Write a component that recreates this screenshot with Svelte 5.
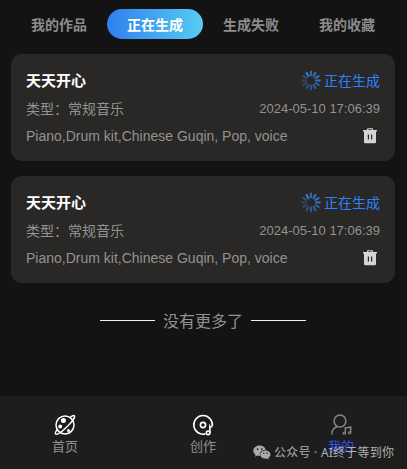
<script>
  const tabs = ['我的作品', '正在生成', '生成失败', '我的收藏'];
  const activeTab = 1;
  const songs = [
    { id: 1, title: '天天开心', type: '常规音乐', date: '2024-05-10 17:06:39', tags: 'Piano,Drum kit,Chinese Guqin, Pop, voice' },
    { id: 2, title: '天天开心', type: '常规音乐', date: '2024-05-10 17:06:39', tags: 'Piano,Drum kit,Chinese Guqin, Pop, voice' }
  ];
  const spokes = Array.from({ length: 12 }, (_, i) => i);
  const fade = [0.75, 0.8, 0.85, 0.9, 0.65, 0.6, 0.55, 0.45, 0.4, 0.35, 0.45, 0.95];
</script>

<div class="page">
  <div class="tabs">
    {#each tabs as tab, i}
      <div class="tab" class:active={i === activeTab}>{tab}</div>
    {/each}
  </div>

  <div class="list">
    {#each songs as song (song.id)}
      <div class="card">
        <div class="row head">
          <span class="title">{song.title}</span>
          <span class="status">
            <svg class="spinner" width="20" height="21" viewBox="0 0 20 21">
              {#each spokes as s}
                <line x1="10" y1="1.7" x2="10" y2="5.3" transform={`rotate(${s * 30} 10 10.5)`} stroke="#347fdc" stroke-width="2.2" stroke-linecap="round" opacity={fade[s]} />
              {/each}
            </svg>
            <span>正在生成</span>
          </span>
        </div>
        <div class="row info">
          <span>类型：{song.type}</span>
          <span class="date">{song.date}</span>
        </div>
        <div class="row tags">
          <span>{song.tags}</span>
          <svg class="trash" width="16" height="16" viewBox="0 0 16 16">
            <path fill="#d4d4d4" fill-rule="evenodd" d="M5 2V1.2Q5 .2 6 .2H10Q11 .2 11 1.2V2H15V3.5H14V14Q14 15.2 12.8 15.2H3.2Q2 15.2 2 14V3.5H1V2ZM6.2 2H9.8V1.3H6.2ZM5.8 6.5V11.5H7V6.5ZM9 6.5V11.5H10.2V6.5Z" />
          </svg>
        </div>
      </div>
    {/each}
  </div>

  <div class="end"><i></i><span>没有更多了</span><i></i></div>

  <nav>
    <div class="item">
      <svg width="22" height="22" viewBox="0 0 22 22" fill="none" stroke="#fff" stroke-width="1.5">
        <circle cx="11" cy="11" r="9" />
        <path d="M16 3.5C18 1.7 20 1.2 20.5 2C21.2 3.5 17 9 12.5 13.2C8 17.5 3 21 1.7 20C.8 19.2 2 17 3.7 15" />
        <g fill="#fff" stroke="none"><circle cx="9.4" cy="6.4" r="2.5" /><circle cx="6.2" cy="12.5" r="1.9" /><circle cx="14.5" cy="16.4" r="1.5" /></g>
      </svg>
      <span>首页</span>
    </div>
    <div class="item">
      <svg width="22" height="22" viewBox="0 0 22 22" fill="none" stroke="#fff" stroke-width="1.6">
        <path d="M13.3 19.9A9.3 9.3 0 1 1 20.3 12" />
        <circle cx="11" cy="11" r="2.6" />
        <circle cx="16.1" cy="18.8" r="1.8" />
        <path d="M17.9 18.8V12.5Q18.3 13.2 20.3 12.6" />
      </svg>
      <span>创作</span>
    </div>
    <div class="item mine">
      <svg width="22" height="22" viewBox="0 0 22 22" fill="none" stroke="#858585" stroke-width="1.5">
        <circle cx="10" cy="7" r="5.9" />
        <path d="M1.7 20.5C1.8 16 4.2 13.2 7.7 12.4M15.3 19.3V13.8L20.7 13.2V18.6" />
        <ellipse cx="14.3" cy="19.3" rx="1.3" ry="1" stroke-width="1.1" /><ellipse cx="19.6" cy="18.8" rx="1.3" ry="1" stroke-width="1.1" />
      </svg>
      <span>我的</span>
    </div>
  </nav>

  <div class="watermark">
    <svg width="18" height="15" viewBox="0 0 18 15">
      <path fill="#aaa" d="M6.7.5C3 .5.3 2.8.3 5.7C.3 7.4 1.2 8.8 2.6 9.7L2 11.8L4.3 10.6Q5.7 11 7 10.9C6.1 7.5 8.8 4.6 12.8 4.7C12.2 2.3 9.8.5 6.7.5Z" />
      <path fill="#aaa" d="M12.4 5.4C9.4 5.4 7.3 7.2 7.3 9.5C7.3 12.2 10.2 14.2 13.8 13.5L15.8 14.5L15.3 12.8C16.7 12 17.5 10.8 17.5 9.5C17.5 7.2 15.3 5.4 12.4 5.4Z" />
      <g fill="#222"><circle cx="4.6" cy="4.1" r=".9" /><circle cx="8.8" cy="4.1" r=".9" /><circle cx="10.8" cy="8.2" r=".75" /><circle cx="14.2" cy="8.2" r=".75" /></g>
    </svg>
    <span>公众号 · AI终于等到你</span>
  </div>
</div>

<style>
  :global(body) { background: #131313; }
  .page {
    position: relative;
    display: flex;
    flex-direction: column;
    box-sizing: border-box;
    width: 407px;
    height: 469px;
    overflow: hidden;
    background: #131313;
    color: #929292;
    font-family: "Liberation Sans", "Noto Sans CJK SC", sans-serif;
    font-size: 14px;
  }
  .tabs { display: flex; padding: 9px 12px 0 11px; }
  .tab {
    flex: 1;
    height: 30px;
    line-height: 32px;
    border-radius: 15px;
    text-align: center;
    font-weight: 700;
    color: #8c8c8c;
  }
  .tab.active { color: #fff; background: linear-gradient(90deg, #2f80ed, #56ccf2); }
  .list { display: flex; flex-direction: column; gap: 15px; padding: 15px 12px 0 11px; }
  .card {
    box-sizing: border-box;
    height: 107px;
    padding: 12px 15px 0;
    border-radius: 11px;
    background: #292826;
  }
  .row { display: flex; justify-content: space-between; align-items: center; height: 28px; white-space: nowrap; }
  .title { color: #fff; font-size: 15px; font-weight: 700; line-height: 20px; padding-top: 1px; }
  .status { display: flex; align-items: center; gap: 3px; color: #2f80ff; }
  .date { font-size: 13px; }
  .trash { margin-right: 2px; }
  .end { display: flex; justify-content: center; align-items: center; gap: 8px; height: 24px; margin-top: 25px; font-size: 16px; padding-right: 1px; }
  .end i { width: 55px; height: 1px; background: #f2f2f2; }
  nav { display: flex; justify-content: space-between; margin-top: auto; height: 73px; padding: 0 53px 0 52px; background: #1d1d1d; font-size: 13px; }
  .item { display: flex; flex-direction: column; align-items: center; width: 26px; padding-top: 18px; }
  .item svg { flex: none; }
  .item span { line-height: 18px; margin-top: 2px; white-space: nowrap; }
  .mine span { color: #2e55f5; }
  .watermark {
    position: absolute;
    left: 253px;
    top: 443px;
    display: flex;
    align-items: center;
    gap: 3px;
    height: 18px;
    color: #b0b0b0;
    font: 12px/18px "Noto Sans", "Noto Sans CJK SC", sans-serif;
    letter-spacing: 0.24px;
    white-space: nowrap;
  }
  .watermark span { padding-top: 1px; }
</style>
